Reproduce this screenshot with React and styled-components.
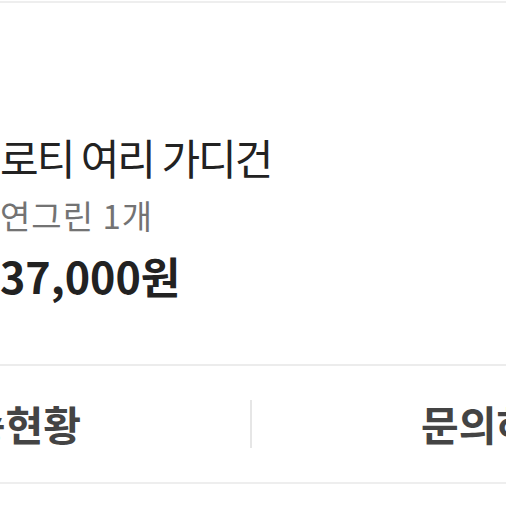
import React from "react";
import styled, { createGlobalStyle } from "styled-components";

const GlobalStyle = createGlobalStyle`
  body {
    margin: 0;
    background: #ffffff;
    font-family: "Noto Sans CJK KR", "Noto Sans", sans-serif;
  }
`;

const Page = styled.div`
  width: 506px;
  height: 506px;
  overflow: hidden;
  padding-top: 1px;
  box-sizing: border-box;
`;

const Card = styled.div`
  width: 980px;
  margin-left: -239px;
  border-top: 2px solid #eeeeee;
`;

const Body = styled.div`
  display: flex;
  padding: 129px 0 0 239px;
  height: 363px;
  box-sizing: border-box;
  border-bottom: 2px solid #ececec;
`;

const Info = styled.div`
  display: flex;
  flex-direction: column;
`;

const Title = styled.div`
  font-size: 42px;
  line-height: 1.2;
  letter-spacing: -2px;
  color: #222222;
  white-space: nowrap;
`;

const Option = styled.div`
  margin-top: 14px;
  font-size: 33px;
  line-height: 1.2;
  letter-spacing: 1px;
  color: #737373;
  white-space: nowrap;
`;

const Price = styled.div`
  margin-top: 14px;
  font-size: 43px;
  font-weight: 700;
  line-height: 1.2;
  color: #222222;
  white-space: nowrap;
`;

const Actions = styled.div`
  display: flex;
  align-items: center;
  height: 116px;
  border-bottom: 2px solid #eeeeee;
`;

const Action = styled.div`
  flex: 1;
  text-align: center;
  font-size: 41px;
  font-weight: 700;
  line-height: 1.2;
  color: #444444;
  white-space: nowrap;
`;

const Separator = styled.div`
  width: 2px;
  height: 48px;
  background: #e6e6e6;
`;

export default function App() {
  return (
    <>
      <GlobalStyle />
      <Page>
        <Card>
          <Body>
            <Info>
              <Title>로티 여리 가디건</Title>
              <Option>연그린 1개</Option>
              <Price>37,000원</Price>
            </Info>
          </Body>
          <Actions>
            <Action>배송현황</Action>
            <Separator />
            <Action>문의하기</Action>
          </Actions>
        </Card>
      </Page>
    </>
  );
}
